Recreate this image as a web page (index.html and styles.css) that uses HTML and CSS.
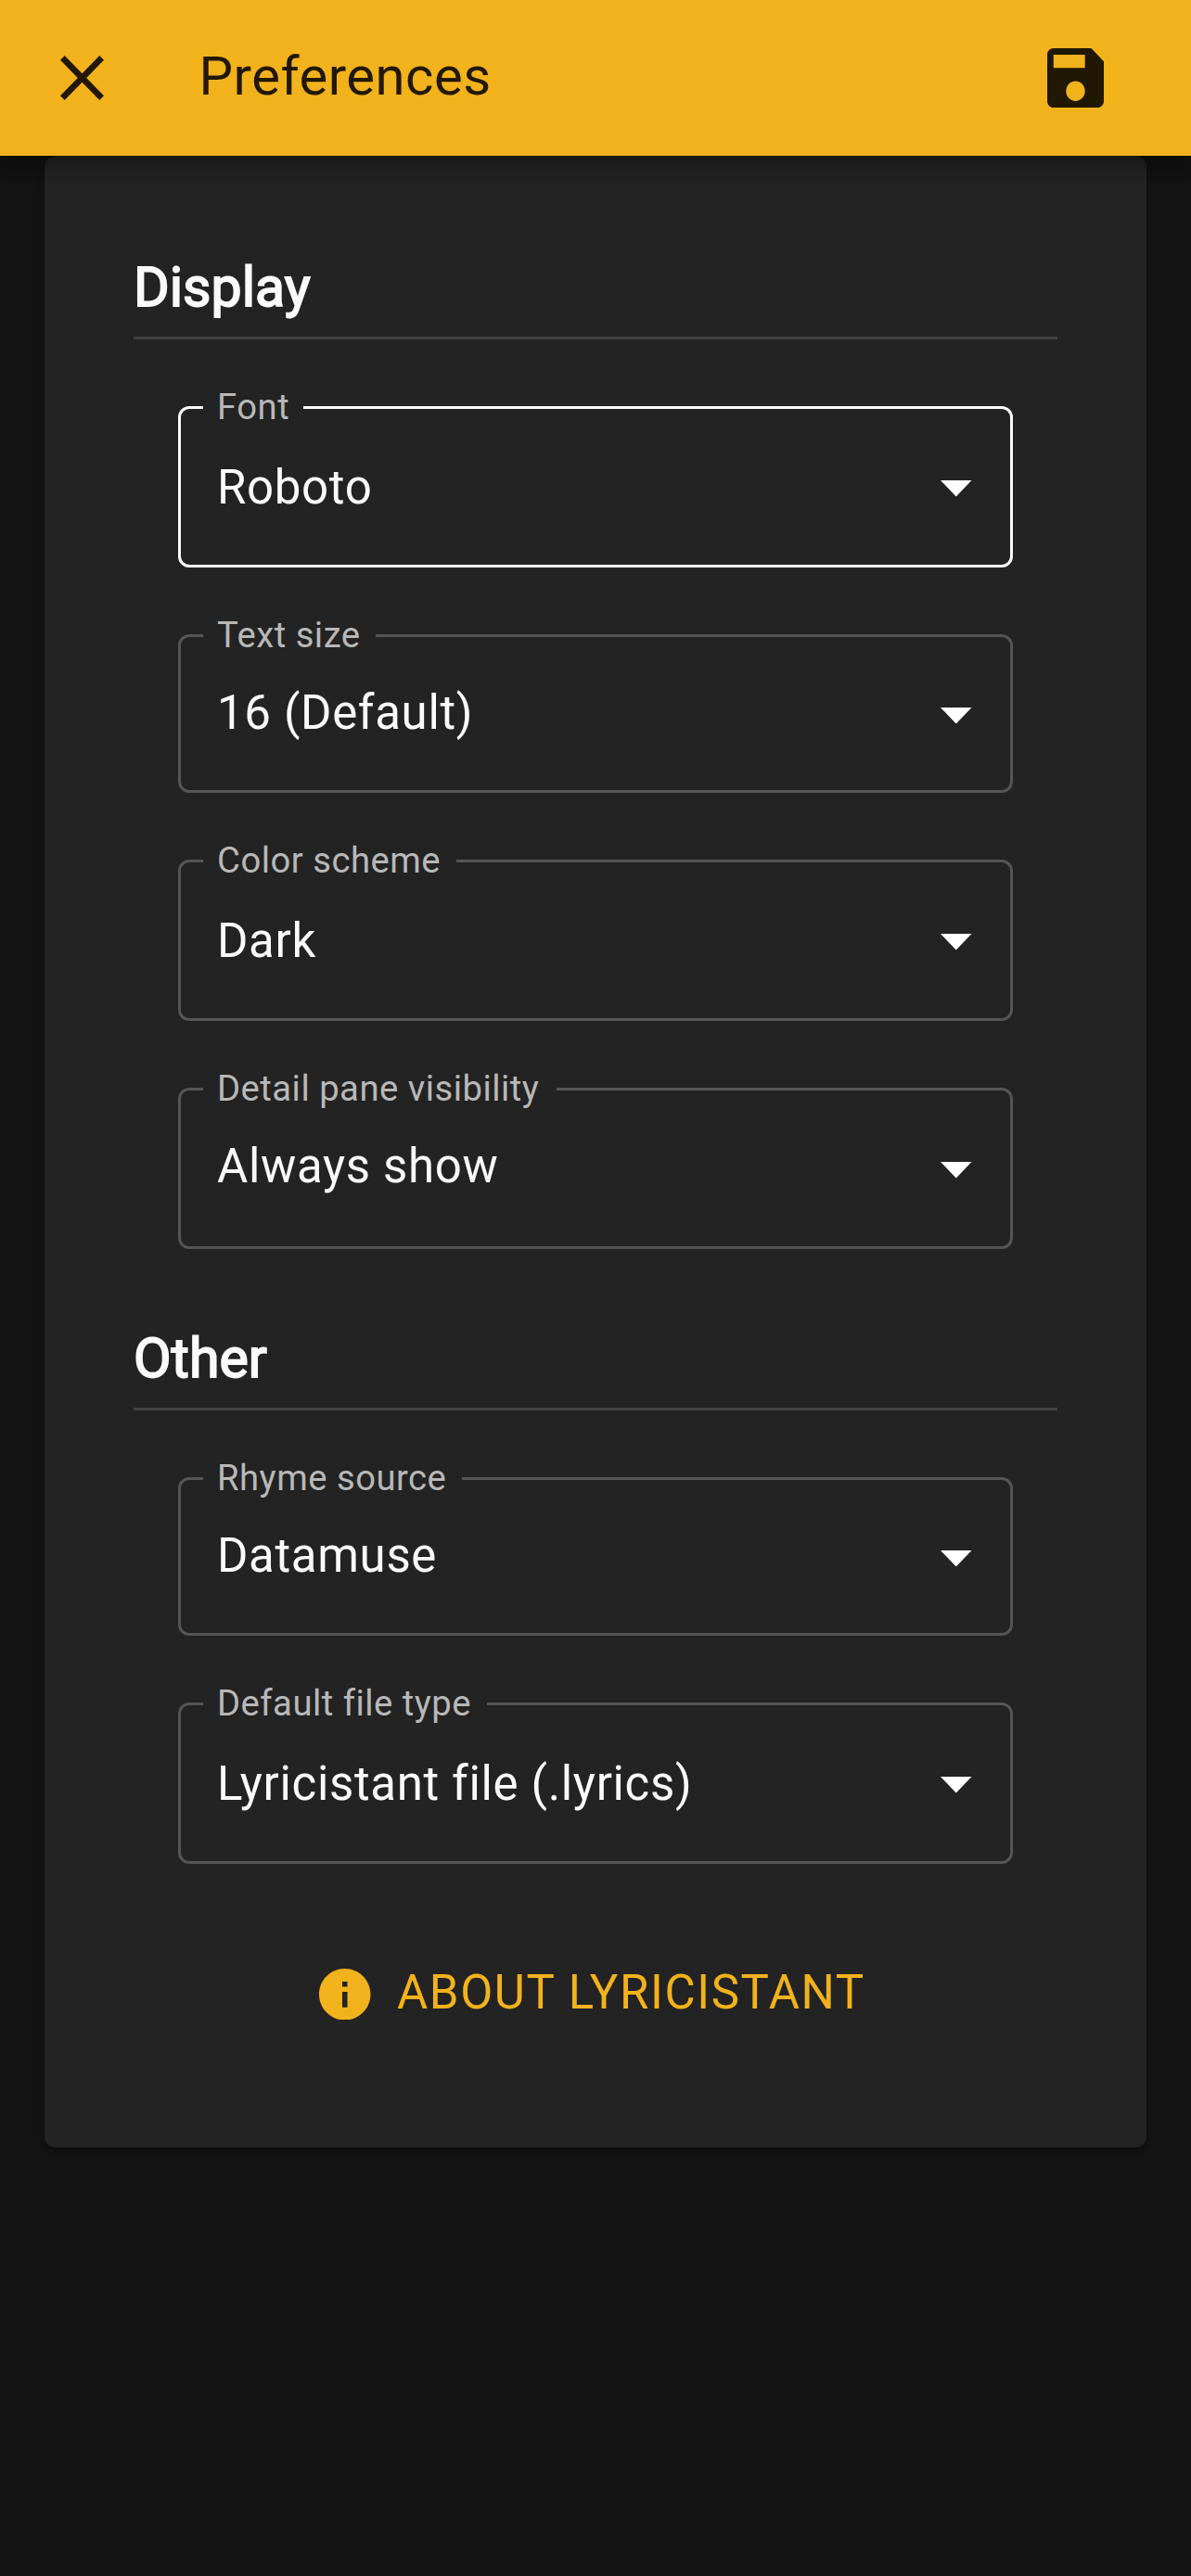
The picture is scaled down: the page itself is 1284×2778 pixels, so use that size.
FILE: index.html
```html
<!DOCTYPE html>
<html lang="en">
<head>
<meta charset="utf-8">
<title>Preferences</title>
<link rel="stylesheet" href="styles.css">
</head>
<body>
<header class="app-bar">
  <svg class="close-icon" viewBox="5 5 14 14" preserveAspectRatio="none" aria-label="Close"><path d="M19 6.41L17.59 5 12 10.59 6.41 5 5 6.41 10.59 12 5 17.59 6.41 19 12 13.41 17.59 19 19 17.59 13.41 12z"/></svg>
  <h1 class="title">Preferences</h1>
  <svg class="save-icon" viewBox="3 3 18 18" preserveAspectRatio="none" aria-label="Save"><path d="M17 3H5c-1.11 0-2 .9-2 2v14c0 1.1.89 2 2 2h14c1.1 0 2-.9 2-2V7l-4-4zm-5 16c-1.66 0-3-1.34-3-3s1.34-3 3-3 3 1.34 3 3-1.34 3-3 3zm3-10H5V5h10v4z"/></svg>
</header>
<main class="card">
  <section class="group">
    <h2 class="heading">Display</h2>
    <div class="fields">
      <fieldset class="field focused">
        <legend class="label w-font">Font</legend>
        <div class="row"><span>Roboto</span><svg class="arrow" viewBox="0 0 34 18" preserveAspectRatio="none"><path d="M0 0h34L17 18z"/></svg></div>
      </fieldset>
      <fieldset class="field short">
        <legend class="label w-size">Text size</legend>
        <div class="row raised"><span>16 (Default)</span><svg class="arrow" viewBox="0 0 34 18" preserveAspectRatio="none"><path d="M0 0h34L17 18z"/></svg></div>
      </fieldset>
      <fieldset class="field">
        <legend class="label w-scheme">Color scheme</legend>
        <div class="row"><span>Dark</span><svg class="arrow" viewBox="0 0 34 18" preserveAspectRatio="none"><path d="M0 0h34L17 18z"/></svg></div>
      </fieldset>
      <fieldset class="field">
        <legend class="label w-detail">Detail pane visibility</legend>
        <div class="row raised"><span>Always show</span><svg class="arrow" viewBox="0 0 34 18" preserveAspectRatio="none"><path d="M0 0h34L17 18z"/></svg></div>
      </fieldset>
    </div>
  </section>
  <section class="group">
    <h2 class="heading">Other</h2>
    <div class="fields">
      <fieldset class="field short">
        <legend class="label w-rhyme">Rhyme source</legend>
        <div class="row raised"><span>Datamuse</span><svg class="arrow" viewBox="0 0 34 18" preserveAspectRatio="none"><path d="M0 0h34L17 18z"/></svg></div>
      </fieldset>
      <fieldset class="field">
        <legend class="label w-file">Default file type</legend>
        <div class="row"><span>Lyricistant file (.lyrics)</span><svg class="arrow" viewBox="0 0 34 18" preserveAspectRatio="none"><path d="M0 0h34L17 18z"/></svg></div>
      </fieldset>
    </div>
  </section>
  <div class="about">
    <svg class="info-icon" viewBox="2 2 20 20"><path d="M12 2C6.48 2 2 6.48 2 12s4.48 10 10 10 10-4.48 10-10S17.52 2 12 2zm1 15h-2v-6h2v6zm0-8h-2V7h2v2z"/></svg>
    <span class="about-text">ABOUT LYRICISTANT</span>
  </div>
</main>
</body>
</html>
```
FILE: styles.css
```css
* { box-sizing: border-box; }

body {
  margin: 0;
  min-height: 2778px;
  background: #131313;
  color: #fafafa;
  font-family: Roboto, "Liberation Sans", sans-serif;
}

svg { display: block; flex: none; }

.app-bar {
  position: relative;
  z-index: 1;
  display: flex;
  align-items: center;
  height: 168px;
  padding: 0 94px 0 65px;
  background: #f2b21c;
  color: #211804;
  box-shadow: 0 6px 12px -3px rgba(0,0,0,.2), 0 12px 15px rgba(0,0,0,.14), 0 3px 30px rgba(0,0,0,.12);
}

.close-icon { width: 47px; height: 48px; fill: currentColor; }
.save-icon { width: 61px; height: 64px; margin-left: auto; fill: currentColor; }

.title {
  margin: 0 0 4px 102.5px;
  font-size: 58px;
  font-weight: 400;
  line-height: 80px;
  letter-spacing: .5px;
}

.card {
  height: 2148px;
  margin: 0 48px;
  padding: 96px 96px 0;
  border-radius: 12px;
  background: #232323;
  box-shadow: 0 6px 3px -3px rgba(0,0,0,.2), 0 3px 3px rgba(0,0,0,.14), 0 3px 9px rgba(0,0,0,.12);
}

.heading {
  height: 102px;
  margin: 0;
  padding-top: 6px;
  border-bottom: 3px solid #424242;
  font-size: 59px;
  font-weight: 400;
  line-height: 80px;
  -webkit-text-stroke: 1.8px currentColor;
}

.fields {
  display: flex;
  flex-direction: column;
  gap: 54px;
  padding: 54px 48px 72px;
}

.field {
  height: 192px;
  min-width: 0;
  margin: 0;
  padding: 0;
  border: 3px solid #555;
  border-radius: 12px;
}

.field.short { height: 189px; }
.field.focused { border-color: #fafafa; }

.label {
  height: 39px;
  margin-left: 24px;
  padding: 0 0 0 15px;
  color: #b8b8b8;
  font-size: 38.25px;
  line-height: 39px;
  letter-spacing: .48px;
  white-space: nowrap;
}

.w-font { width: 108px; }
.w-size { width: 186px; }
.w-scheme { width: 273px; }
.w-detail { width: 381px; }
.w-rhyme { width: 279px; }
.w-file { width: 306px; }

.row {
  display: flex;
  align-items: flex-start;
  justify-content: space-between;
  padding: 37px 41.5px 0 39px;
  font-size: 51px;
  line-height: 60px;
  letter-spacing: .65px;
}

.row.raised { padding-top: 34px; }

.arrow {
  width: 33.5px;
  height: 17.5px;
  margin-top: 22px;
  fill: #fff;
}

.raised .arrow { margin-top: 25px; }
.short .arrow { margin-top: 23.5px; }

.about {
  display: flex;
  align-items: center;
  height: 64px;
  margin-top: 36.5px;
  padding-left: 200px;
  color: #f2b21c;
}

.info-icon { width: 55.5px; height: 55.5px; fill: currentColor; }

.about-text {
  margin: 0 0 4px 28.5px;
  font-size: 51px;
  line-height: 60px;
  letter-spacing: 1.58px;
  white-space: nowrap;
}
```
